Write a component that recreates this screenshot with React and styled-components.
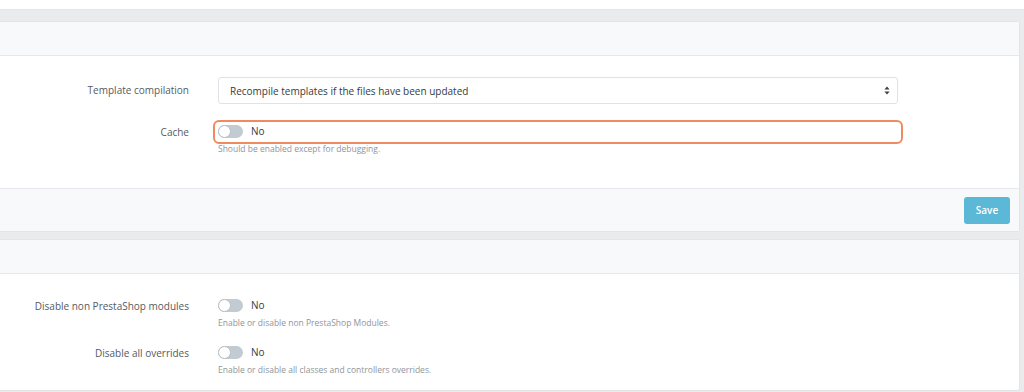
import React from 'react'
import styled, { createGlobalStyle } from 'styled-components'

const GlobalStyle = createGlobalStyle`
  html, body {
    margin: 0;
    padding: 0;
    background: #eaebed;
    font-family: "Open Sans", "Liberation Sans", sans-serif;
    overflow: hidden;
  }
  * { box-sizing: border-box; }
`

function Toggle() {
  return (
    <Switch>
      <Knob />
    </Switch>
  )
}

function SelectArrows() {
  return (
    <svg width="6" height="9" viewBox="0 0 6 9">
      <path d="M3 0.5 L5.6 3.6 L0.4 3.6 Z" fill="#3d4146" />
      <path d="M3 8.5 L5.6 5.4 L0.4 5.4 Z" fill="#3d4146" />
    </svg>
  )
}

function SwitchRow({ label, help }) {
  return (
    <Row>
      <Label $h="18px">{label}</Label>
      <Control>
        <SwitchLine>
          <Toggle />
          <State>No</State>
        </SwitchLine>
        <Help>{help}</Help>
      </Control>
    </Row>
  )
}

export default function App() {
  return (
    <>
      <GlobalStyle />
      <TopStrip />
      <Page>
        <Panel>
          <PanelHeader />
          <PanelBody $pad="21px 0 0">
            <Row>
              <Label $h="27px">Template compilation</Label>
              <Control>
                <Select>
                  <span>Recompile templates if the files have been updated</span>
                  <SelectArrows />
                </Select>
              </Control>
            </Row>
            <Row $mt="16px">
              <Label $h="24px">Cache</Label>
              <Control>
                <Highlight>
                  <Toggle />
                  <State>No</State>
                </Highlight>
                <Help $mt="-1px">Should be enabled except for debugging.</Help>
              </Control>
            </Row>
          </PanelBody>
          <PanelFooter>
            <SaveButton>Save</SaveButton>
          </PanelFooter>
        </Panel>
        <Panel $mt="7px">
          <PanelHeader />
          <PanelBody $pad="23px 0 0">
            <SwitchRow
              label="Disable non PrestaShop modules"
              help="Enable or disable non PrestaShop Modules."
            />
            <Spacer />
            <SwitchRow
              label="Disable all overrides"
              help="Enable or disable all classes and controllers overrides."
            />
          </PanelBody>
        </Panel>
      </Page>
    </>
  )
}

const TopStrip = styled.div`
  height: 10px;
  background: #ffffff;
  border-bottom: 1px solid #e4e5e7;
`

const Page = styled.div`
  padding: 11px 4px 0 0;
`

const Panel = styled.div`
  margin-left: -4px;
  margin-top: ${p => p.$mt || '0'};
  background: #ffffff;
  border: 1px solid #e2e4e7;
  border-radius: 3px;
`

const PanelHeader = styled.div`
  height: 34px;
  background: #f8f9fb;
  border-bottom: 1px solid #e6e8eb;
`

const PanelBody = styled.div`
  height: 132px;
  padding: ${p => p.$pad};
  &:last-child {
    height: 116px;
  }
`

const PanelFooter = styled.div`
  height: 43px;
  background: #f8f9fb;
  border-top: 1px solid #e6e8eb;
  display: flex;
  align-items: center;
  justify-content: flex-end;
  padding-right: 9px;
`

const SaveButton = styled.button`
  width: 46px;
  height: 27px;
  border: none;
  border-radius: 3px;
  background: #5bb8d6;
  color: #ffffff;
  font-family: "Open Sans", "Liberation Sans", sans-serif;
  font-size: 10px;
  font-weight: 600;
  padding: 0;
`

const Row = styled.div`
  display: grid;
  grid-template-columns: 192px 680px;
  column-gap: 29px;
  margin-top: ${p => p.$mt || '0'};
`

const Label = styled.div`
  text-align: right;
  font-size: 10px;
  color: #555a60;
  line-height: ${p => p.$h || '16px'};
  height: ${p => p.$h || '16px'};
  white-space: nowrap;
`

const Control = styled.div`
  display: flex;
  flex-direction: column;
`

const Select = styled.div`
  height: 27px;
  border: 1px solid #dfe2e6;
  border-radius: 3px;
  display: flex;
  align-items: center;
  justify-content: space-between;
  padding: 0 7px 0 11px;
  font-size: 10px;
  color: #363a41;
`

const Highlight = styled.div`
  position: relative;
  z-index: 1;
  height: 24px;
  margin-left: -5px;
  width: 690px;
  border: 2px solid #f08a5f;
  border-radius: 6px;
  display: flex;
  align-items: center;
  padding: 0 0 2px 3px;
`

const SwitchLine = styled.div`
  height: 16px;
  display: flex;
  align-items: center;
`

const Switch = styled.div`
  width: 25px;
  height: 13px;
  border-radius: 7px;
  background: #c1cbd1;
  position: relative;
  flex-shrink: 0;
`

const Knob = styled.div`
  position: absolute;
  left: 0;
  top: 0;
  width: 13px;
  height: 13px;
  border-radius: 50%;
  background: #ffffff;
  border: 1px solid #b5c0c7;
`

const State = styled.span`
  margin-left: 8px;
  font-size: 10px;
  color: #363a41;
`

const Help = styled.div`
  margin-top: ${p => p.$mt || '4px'};
  font-size: 8.5px;
  line-height: 11px;
  color: #90959b;
  white-space: nowrap;
`

const Spacer = styled.div`
  height: 16px;
`
